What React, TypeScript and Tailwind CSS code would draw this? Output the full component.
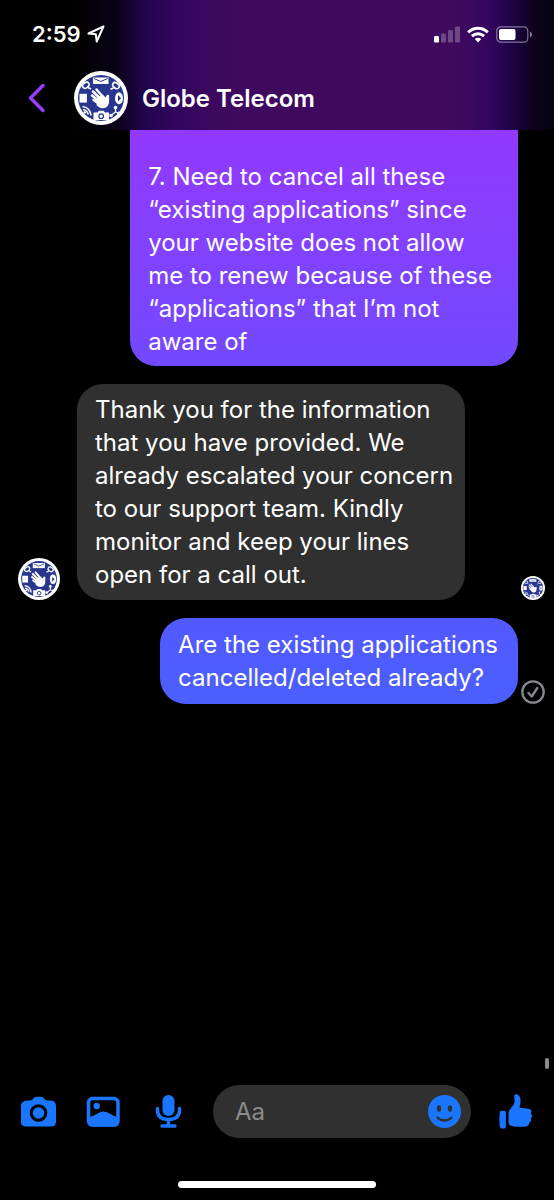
import type { ReactNode } from 'react';

function GlobeAvatar({ className }: { className: string }) {
  return (
    <svg viewBox="0 0 54 54" className={className} role="img" aria-label="Globe Telecom">
      <circle cx="27" cy="27" r="27" fill="#fff" />
      <circle cx="27" cy="27" r="23" fill="#28368f" />
      {/* envelope */}
      <rect x="19" y="6.5" width="15.5" height="6.5" fill="#fff" />
      <path d="M20 7.5l6.8 3 6.8-3" fill="none" stroke="#28368f" strokeWidth="1" />
      {/* magnifier and chat */}
      <g fill="none" stroke="#fff" strokeWidth="1.6">
        <ellipse cx="11.8" cy="14.2" rx="3.6" ry="2.6" transform="rotate(-35 11.8 14.2)" />
        <path d="M14 16.5l3 1.5" />
        <ellipse cx="42" cy="14.6" rx="3.6" ry="2.6" transform="rotate(35 42 14.6)" />
        <path d="M39.5 17l-3 1.2" />
      </g>
      <rect x="5.5" y="22.8" width="7.4" height="8.8" fill="#fff" />
      <ellipse cx="45" cy="27.3" rx="4" ry="6" fill="#fff" />
      <path d="M44 24v6.6l3-3.3z" fill="#28368f" />
      {/* signal waves */}
      <g fill="none" stroke="#fff" strokeWidth="1.5">
        <path d="M8.5 35.5q7.5 1 8.5 9" />
        <path d="M9 38.5q4.5 1 5.2 5" />
      </g>
      <circle cx="10.8" cy="41.5" r="1.2" fill="#fff" />
      {/* camera */}
      <path d="M19.5 41.5h4l1.5-1.7h4.5l1.5 1.7h4v7.5h-15.5z" fill="#fff" />
      <circle cx="27.2" cy="45.2" r="2.3" fill="none" stroke="#28368f" strokeWidth="1.2" />
      {/* share */}
      <path d="M41.5 36.5v4.5l-4.5 3.5M41.5 41l4 1.5" stroke="#fff" strokeWidth="1.3" fill="none" />
      <g fill="#fff">
        <circle cx="41.5" cy="36.5" r="1.8" />
        <circle cx="37" cy="44.5" r="1.8" />
        <circle cx="45" cy="42.2" r="1.6" />
      </g>
      {/* waving hand */}
      <g stroke="#fff" strokeLinecap="round" strokeWidth="2.5">
        <path d="M22.5 18.5l7 8" />
        <path d="M19 20.5l8 8" />
        <path d="M18 24.5l8 6.5" />
        <path d="M19.5 29l6 4" />
      </g>
      <path d="M23 27l5.5-3.5 3 3 1.5-2.5q2-.8 2.2 1.200l-.2 6q-.5 4.800-4.500 5.800-5.500.8-8-3z" fill="#fff" />
    </svg>
  );
}

function StatusBar() {
  return (
    <div className="flex h-[68px] items-center justify-between pl-8 pr-[21px]">
      <div className="flex items-center gap-[6px]">
        <span className="text-[22px] leading-7 font-semibold">2:59</span>
        <svg viewBox="0 0 18 18" className="size-[18px]" fill="none" stroke="#fff" strokeWidth="2" strokeLinejoin="round">
          <path d="M16.5 1.5L1.5 8.5l7.3.7.9 7.3z" />
        </svg>
      </div>
      <div className="flex items-center gap-[7px]">
        <svg viewBox="0 0 26 17" className="h-[17px] w-[26px]" fill="#fff">
          <rect x="0" y="10" width="5" height="6.5" rx="1.3" />
          <g opacity=".25">
            <rect x="7" y="7.5" width="5" height="9" rx="1.3" />
            <rect x="14" y="4" width="5" height="12.5" rx="1.3" />
            <rect x="21" y="0.5" width="5" height="16" rx="1.3" />
          </g>
        </svg>
        <svg viewBox="0 0 22 17" className="h-[17px] w-[22px]" fill="none" stroke="#fff" strokeWidth="3">
          <path d="M1.2 6.3q4.3-4 9.8-4t9.8 4" />
          <path d="M4.9 10.2q2.7-2.4 6.1-2.4t6.1 2.4" />
          <path d="M7.8 13q1.4-1.2 3.2-1.2t3.2 1.2L11 16.4z" fill="#fff" stroke="none" />
        </svg>
        <svg viewBox="0 0 37 17" className="h-[17px] w-[37px]">
          <rect x=".8" y=".8" width="31" height="15.4" rx="4" fill="none" stroke="#fff" strokeOpacity=".45" strokeWidth="1.2" />
          <rect x="3" y="3" width="16.5" height="11" rx="2" fill="#fff" />
          <path d="M34 5.5q2 1 2 3t-2 3z" fill="#fff" fillOpacity=".5" />
        </svg>
      </div>
    </div>
  );
}

function ChatHeader() {
  return (
    <header className="h-[130px] bg-[linear-gradient(90deg,#000_0%,#000_14%,#0b0218_21%,#21044c_26%,#33065f_32%,#3f0a5e_42%,#400a5e_82%,#34065f_88%,#20044a_92%,#0b0218_97%,#06010e_100%)]">
      <StatusBar />
      <div className="flex h-[60px] items-center pl-7">
        <button type="button" aria-label="Back" className="w-[46px]">
          <svg viewBox="0 0 18 30" className="h-[30px] w-[18px]" fill="none" stroke="#9a3cff" strokeWidth="3.5" strokeLinecap="round" strokeLinejoin="round">
            <path d="M15 2.5L2.5 15 15 27.5" />
          </svg>
        </button>
        <GlobeAvatar className="size-[54px]" />
        <h1 className="pl-[14px] text-[24px] leading-[33px] font-semibold">Globe Telecom</h1>
      </div>
    </header>
  );
}

function Bubble({ className, children }: { className: string; children: ReactNode }) {
  return (
    <p className={`pl-[18px] text-[24px] leading-[33px] whitespace-pre-line ${className}`}>{children}</p>
  );
}

function Composer() {
  return (
    <form className="flex items-center px-5" onSubmit={(e) => e.preventDefault()}>
      <div className="flex gap-[29px] text-[#1a75ff]">
        <button type="button" aria-label="Camera">
          <svg viewBox="0 1 36 36" className="size-9" fill="currentColor">
            <path d="M7 7.5h3.5q1.500-.2 2.500-1.500 1.500-2.200 3.500-2.200h4.500q2 0 3.500 2.200 1 1.300 2.500 1.500H31q5 .5 5 5.500v15.500q0 5-5 5H6q-5 0-5-5V13q0-5 6-5.500z" />
            <circle cx="18.5" cy="20" r="7.3" fill="none" stroke="#000" strokeWidth="3" />
          </svg>
        </button>
        <button type="button" aria-label="Photos">
          <svg viewBox="0 1 36 36" className="size-9">
            <rect x="3.5" y="5.5" width="29.5" height="26.5" rx="4" fill="none" stroke="currentColor" strokeWidth="3.5" />
            <circle cx="11.7" cy="13" r="3.2" fill="currentColor" />
            <path d="M3 24.5q4-.5 8.5-3.5 3.5-2.5 7-2.5t7 2.5 8.5 3.5v5q0 4-4 4H7q-4 0-4-4z" fill="currentColor" />
          </svg>
        </button>
        <button type="button" aria-label="Voice message">
          <svg viewBox="0 1 36 36" className="size-9">
            <rect x="12.5" y="2" width="12" height="21" rx="6" fill="currentColor" />
            <path d="M7.5 15.5v1.5q0 9.5 11 9.5t11-9.5v-1.5M18.5 26.5v6M12 33h13" fill="none" stroke="currentColor" strokeWidth="3.4" strokeLinecap="round" />
          </svg>
        </button>
      </div>
      <div className="mx-[27px] flex h-[53px] min-w-0 flex-1 items-center rounded-full bg-[#303030] pr-[10px] pl-[22px]">
        <input
          type="text"
          aria-label="Message"
          placeholder="Aa"
          className="min-w-0 flex-1 bg-transparent text-[24px] leading-[33px] outline-none placeholder:text-[#8b8b8b]"
        />
        <button type="button" aria-label="Emoji">
          <svg viewBox="0 0 33 33" className="size-[33px]">
            <circle cx="16.5" cy="16.5" r="16.5" fill="#1a75ff" />
            <ellipse cx="11" cy="13.5" rx="2.2" ry="3.2" fill="#303030" />
            <ellipse cx="22" cy="13.5" rx="2.2" ry="3.2" fill="#303030" />
            <path d="M9.5 22.5q3 3 7 3t7-3" fill="none" stroke="#303030" strokeWidth="2.4" strokeLinecap="round" />
          </svg>
        </button>
      </div>
      <button type="button" aria-label="Send a like" className="text-[#1a75ff]">
        <svg viewBox="0 1 36 36" className="size-9" fill="currentColor">
          <path d="M3.5 17.8h2.7q1.7 0 1.7 1.7v14.2q0 1.7-1.7 1.7H3.5Q2 35.4 1.7 33q-.8-6.5 0-13.5.2-1.7 1.8-1.7z" />
          <path d="M17 1.5c3-.8 5.2 1.7 5.5 5 .3 3-.3 5-.9 6.900-.3 1 .1 1.500 1 1.500 3 0 6.400.4 8.900 1.100 2.200.7 2.600 3.200 1.100 4.500 1.900 1.300 1.800 3.900.1 5 .9 1.700.2 3.600-1.700 4.400.4 1.900-.9 3.200-3 3.500-5.500.8-11 .6-15-.7-1.500-.5-2.500-1.700-2.500-3.500v-8.500c0-2.500 1.300-4.200 3-6.200 1.800-2.200 3.100-3.800 3.100-6.500 0-2-1-5.800.4-6.500z" />
        </svg>
      </button>
    </form>
  );
}

export default function App() {
  return (
    <div className="relative flex min-h-screen flex-col bg-black font-[Inter,'Liberation_Sans',sans-serif] text-white">
      <ChatHeader />

      <main className="flex flex-1 flex-col gap-[18px]">
        <div className="flex justify-end pr-9">
          <Bubble className="w-[70vw] rounded-b-[26px] bg-linear-to-b from-[#9238ff] to-[#7149ff] pt-[30px] pr-2 pb-2">
            {'7. Need to cancel all these\n“existing applications” since\nyour website does not allow\nme to renew because of these\n“applications” that I’m not\naware of'}
          </Bubble>
        </div>

        <div className="flex items-end pr-[9px] pl-[18px]">
          <GlobeAvatar className="mr-[17px] size-[42px] shrink-0" />
          <Bubble className="w-[70vw] rounded-[26px] bg-[#303030] py-[9px] pr-2">
            {'Thank you for the information\nthat you have provided. We\nalready escalated your concern\nto our support team. Kindly\nmonitor and keep your lines\nopen for a call out.'}
          </Bubble>
          <GlobeAvatar className="ml-auto size-6 shrink-0" />
        </div>

        <div className="flex items-end justify-end gap-[3px] pr-[9px]">
          <Bubble className="rounded-[26px] bg-linear-to-b from-[#5259ff] to-[#4b5fff] py-[10px] pr-5">
            {'Are the existing applications\ncancelled/deleted already?'}
          </Bubble>
          <svg viewBox="0 0 24 24" className="size-6 shrink-0" fill="none" stroke="#85878c" strokeLinecap="round" strokeLinejoin="round" role="img" aria-label="Sent">
            <circle cx="12" cy="12" r="10.7" strokeWidth="2.3" />
            <path d="M7.5 13l3.2 3.5 5.6-8.500" strokeWidth="2.4" />
          </svg>
        </div>
      </main>

      {/* scroll indicator */}
      <div className="absolute right-[5px] bottom-[131px] h-[11px] w-[4px] rounded-full bg-[#8a8a8a]" />

      <Composer />
      <div className="flex justify-center pt-[43px] pb-3">
        <div className="h-[7px] w-[198px] rounded-full bg-white" />
      </div>
    </div>
  );
}
